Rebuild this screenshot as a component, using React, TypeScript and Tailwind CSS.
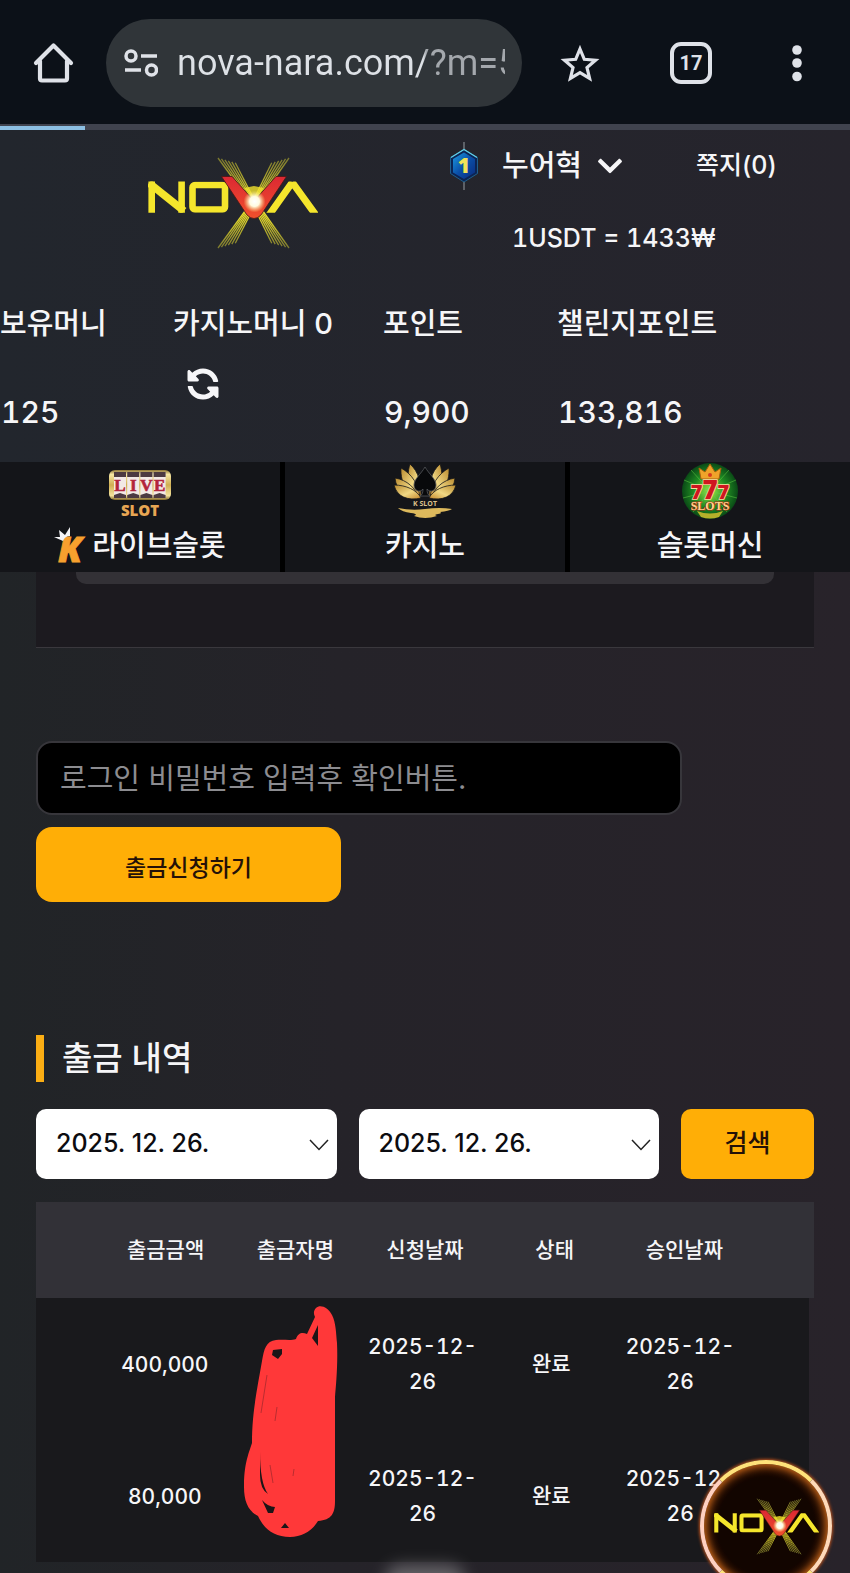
import { useId } from "react";
import { FaChevronDown, FaSyncAlt } from "react-icons/fa";

const RAYS = [0, 3, 6, 9, 12, 15];

function NovaLogo({ className }: { className: string }) {
  const id = useId();
  return (
    <svg viewBox="0 0 170 92" className={className} role="img" aria-label="NOVA">
      <defs>
        <linearGradient id={`${id}ray`} x1="0" y1="0" x2="0" y2="92" gradientUnits="userSpaceOnUse">
          <stop offset="0" stopColor="#77752f" />
          <stop offset="0.35" stopColor="#cfc62c" />
          <stop offset="0.5" stopColor="#fff22e" />
          <stop offset="0.7" stopColor="#d9cf2c" />
          <stop offset="1" stopColor="#77752f" />
        </linearGradient>
        <linearGradient id={`${id}red`} x1="0" y1="0" x2="0" y2="1">
          <stop offset="0" stopColor="#dc2833" />
          <stop offset="1" stopColor="#f0512c" />
        </linearGradient>
        <radialGradient id={`${id}glow`}>
          <stop offset="0" stopColor="#ffffff" />
          <stop offset="0.45" stopColor="#fffbe0" />
          <stop offset="1" stopColor="#ffe680" stopOpacity="0" />
        </radialGradient>
        <clipPath id={`${id}band`}>
          <rect x="0" y="24.600" width="170" height="31.200" />
        </clipPath>
      </defs>
      <g fill="none" stroke="#f5e62c" strokeWidth="6.600" clipPath={`url(#${id}band)`}>
        <path d="M3.700 60V22M33.600 60V22" />
        <path d="M1 26L36 54" strokeWidth="7.600" />
        <rect x="44.500" y="28" width="32.500" height="24.500" rx="2.500" />
        <path d="M119 61L144.500 25M144 25L170 61" strokeWidth="7" />
      </g>
      <g stroke={`url(#${id}ray)`} strokeWidth="1.300">
        {RAYS.map((n) => (
          <g key={n}>
            <line x1={70 + n * 1.15} y1={1 + n * 0.32} x2={100 + n * 0.4} y2="42" />
            <line x1={141 - n * 1.15} y1={1 + n * 0.32} x2={112 - n * 0.4} y2="42" />
            <line x1={70 + n * 1.15} y1={91 - n * 0.32} x2={100 + n * 0.4} y2="50" />
            <line x1={141 - n * 1.15} y1={91 - n * 0.32} x2={112 - n * 0.4} y2="50" />
          </g>
        ))}
      </g>
      <path
        d="M73.500 19.500H84L106 44 128 19.500H138.500L113 58Q106 65 99 58Z"
        fill={`url(#${id}red)`}
        stroke="#4a1714"
        strokeWidth="0.800"
      />
      <path d="M96 31L106 29 116 31 107 43Z" fill="#f3e42c" opacity="0.8" />
      <circle cx="106.500" cy="44.500" r="11" fill={`url(#${id}glow)`} />
    </svg>
  );
}

function BrowserBar() {
  return (
    <div className="bg-[#0c1118]">
      <div className="flex h-[124px] items-center pt-[2px] pl-8 pr-9 text-[#dfe2e8]">
        <button type="button" aria-label="홈" className="shrink-0">
          <svg viewBox="0 0 44 44" className="size-11" fill="none" stroke="currentColor" strokeWidth="4.200" strokeLinejoin="round" strokeLinecap="round">
            <path d="M4 22L21.500 4.500 39 22M8 20V37.500Q8 39.500 10 39.500H33Q35 39.500 35 37.500V20" />
          </svg>
        </button>
        <div className="ml-[30px] flex h-[88px] min-w-0 flex-1 items-center rounded-full bg-[#303539] pl-[18px] pr-[17px]">
          <svg viewBox="0 0 34 30" className="h-[30px] w-[34px] shrink-0" fill="none" stroke="currentColor" strokeWidth="3.500">
            <circle cx="7" cy="8" r="5" />
            <path d="M17 8H33M1 22H17" />
            <circle cx="27.500" cy="22" r="5" />
          </svg>
          <input
            aria-label="주소"
            readOnly
            value="nova-nara.com/?m=5"
            className="ml-[19px] min-w-0 flex-1 bg-linear-to-r from-[#dde1e6] from-75% to-[#a4a8ad] to-76% bg-clip-text font-[Roboto,sans-serif] text-[36px] leading-[48px] text-transparent outline-none"
          />
        </div>
        <button type="button" aria-label="즐겨찾기" className="ml-[38px] shrink-0">
          <svg viewBox="0 0 40 40" className="size-10" fill="none" stroke="currentColor" strokeWidth="3.200">
            <path d="M20 6L24.300 16.300 35.500 17.200 27 24.500 29.600 35.400 20 29.600 10.400 35.400 13 24.500 4.500 17.200 15.700 16.300Z" />
          </svg>
        </button>
        <button
          type="button"
          aria-label="탭 17개"
          className="ml-[70px] flex size-[42px] shrink-0 items-center justify-center rounded-[11px] border-4 border-current font-[Roboto,sans-serif] text-[20px] font-bold"
        >
          17
        </button>
        <button type="button" aria-label="메뉴" className="ml-[68px] shrink-0">
          <svg viewBox="0 0 34 44" className="h-11 w-[34px]" fill="currentColor">
            <circle cx="17" cy="9" r="4.800" />
            <circle cx="17" cy="22" r="4.800" />
            <circle cx="17" cy="35.500" r="4.800" />
          </svg>
        </button>
      </div>
      <div className="h-[6px] bg-[#40434e] pt-[2px]">
        <div className="h-1 w-[10%] bg-[#8cbfe2]" />
      </div>
    </div>
  );
}

function RankBadge() {
  const id = useId();
  return (
    <svg viewBox="0 0 28 48" className="h-12 w-7 shrink-0" role="img" aria-label="레벨 1">
      <defs>
        <linearGradient id={id} x1="0" y1="0" x2="1" y2="1">
          <stop offset="0" stopColor="#1d9be0" />
          <stop offset="0.5" stopColor="#0a4fa8" />
          <stop offset="1" stopColor="#0a2a7c" />
        </linearGradient>
      </defs>
      <path d="M14 0V8M14 40V48" stroke="#7d8288" strokeWidth="1.300" />
      <path d="M14 7.500L27.500 15.500V31.500L14 40 0.500 31.500V15.500Z" fill="#0b2454" stroke="#1f5f8c" />
      <path d="M14 10.500L25 17V30.500L14 37 3 30.500V17Z" fill={`url(#${id})`} />
      <path d="M1 15.500L14 7.500 27 15.500" fill="none" stroke="#62d0e8" strokeWidth="1.300" />
      <text x="14" y="31" textAnchor="middle" fontSize="21" fontWeight="800" fill="#f0e25a" fontFamily="Open Sans, sans-serif">
        1
      </text>
    </svg>
  );
}

function SiteHeader() {
  return (
    <header className="grid h-[148px] grid-cols-[450fr_400fr]">
      <a href="#home" className="flex items-start justify-center pt-[27px] pl-[15px]">
        <NovaLogo className="h-[92px] w-[170px]" />
      </a>
      <div className="pt-3">
        <div className="flex h-12 items-center">
          <RankBadge />
          <button type="button" className="ml-6 flex items-center gap-[14px] text-[29px] font-medium">
            누어혁
            <FaChevronDown className="size-7" aria-hidden />
          </button>
          <a href="#messages" className="ml-[72px] text-[25px] font-medium">
            쪽지(0)
          </a>
        </div>
        <p className="mt-[30px] pl-[62px] text-[25px] leading-9 font-medium tabular-nums">1USDT = 1433₩</p>
      </div>
    </header>
  );
}

function Balances() {
  const label = "text-[29px] leading-[44px] font-medium whitespace-nowrap";
  const value = "mt-11 pl-px text-[30px] leading-[44px] font-medium tabular-nums";
  return (
    <section className="grid h-[184px] grid-cols-[173fr_210fr_174fr_293fr] pt-6">
      <div>
        <h2 className={label}>보유머니</h2>
        <p className={value}>125</p>
      </div>
      <div>
        <h2 className={label}>카지노머니 0</h2>
        <button type="button" aria-label="새로고침" className="mt-[22px] ml-[14px]">
          <FaSyncAlt className="size-8 -scale-x-100" aria-hidden />
        </button>
      </div>
      <div>
        <h2 className={label}>포인트</h2>
        <p className={value}>9,900</p>
      </div>
      <div>
        <h2 className={label}>챌린지포인트</h2>
        <p className={value}>133,816</p>
      </div>
    </section>
  );
}

function LiveSlotIcon() {
  const id = useId();
  return (
    <svg viewBox="0 0 64 50" className="h-[50px] w-16" aria-hidden>
      <defs>
        <linearGradient id={id} x1="0" y1="0" x2="0" y2="1">
          <stop offset="0" stopColor="#8c7336" />
          <stop offset="0.15" stopColor="#f6e7a4" />
          <stop offset="0.5" stopColor="#cfae52" />
          <stop offset="0.85" stopColor="#f4e39c" />
          <stop offset="1" stopColor="#806628" />
        </linearGradient>
      </defs>
      <rect x="1" y="1" width="62" height="30" rx="6" fill={`url(#${id})`} />
      {["L", "I", "V", "E"].map((c, i) => (
        <g key={c}>
          <rect x={6 + i * 13.2} y="3" width="12" height="26" rx="1" fill="#f2e9e6" />
          <path d={`M${6 + i * 13.2} 3h12v5h-12zM${6 + i * 13.2} 29v-3l6 -2 6 2v3z`} fill="#4c3a42" />
          <text
            x={12 + i * 13.2}
            y="22"
            textAnchor="middle"
            fontSize="17"
            fontWeight="700"
            fill="#b3243b"
            stroke="#b3243b"
            strokeWidth="0.600"
            fontFamily="Liberation Serif, serif"
          >
            {c}
          </text>
        </g>
      ))}
      <text x="32" y="47" textAnchor="middle" fontSize="15" fontWeight="800" fill="#e8a653" fontFamily="Open Sans, sans-serif">
        SLOT
      </text>
    </svg>
  );
}

function LotusIcon() {
  const id = useId();
  const petals = (
    <g fill={`url(#${id})`} stroke="#141518" strokeWidth="0.800">
      <path d="M27 34C17 30 11 16 16 1C25 9 27 20 27 34Z" />
      <path d="M26 35C15 33 6 21 7 5C18 11 25 22 26 35Z" />
      <path d="M25 36C12 36 2 27 1 15C13 17 22 25 25 36Z" />
      <path d="M27 35C14 38 3 34 0 22C12 22 23 27 27 35Z" />
    </g>
  );
  return (
    <svg viewBox="0 0 62 56" className="h-14 w-[62px]" aria-hidden>
      <defs>
        <linearGradient id={id} x1="0" y1="0" x2="1" y2="1">
          <stop offset="0" stopColor="#b98a2e" />
          <stop offset="0.55" stopColor="#f0d884" />
          <stop offset="1" stopColor="#c4862a" />
        </linearGradient>
      </defs>
      {petals}
      <g transform="matrix(-1 0 0 1 62 0)">{petals}</g>
      <path
        d="M31 4C35 11 42 16 42 22C42 28 36 30 33 26C33 30 34 32 36 33H26C28 32 29 30 29 26C26 30 20 28 20 22C20 16 27 11 31 4Z"
        fill="#08090b"
        stroke="#55585c"
        strokeWidth="0.800"
      />
      <text x="31" y="43" textAnchor="middle" fontSize="7" fontWeight="700" fill="#dcc08b" fontFamily="Open Sans, sans-serif">
        K SLOT
      </text>
      <path d="M4 45Q18 48 31 46Q46 44 58 46Q55 48 46 49Q49 50 44 51Q39 52 43 53Q31 57 20 53Q25 51 17 50Q8 49 4 45Z" fill="#ddb95c" />
    </svg>
  );
}

function SevensIcon() {
  const id = useId();
  return (
    <svg viewBox="0 0 58 58" className="size-[58px]" aria-hidden>
      <defs>
        <radialGradient id={id}>
          <stop offset="0" stopColor="#9be84a" />
          <stop offset="0.6" stopColor="#1f8a22" />
          <stop offset="1" stopColor="#0a4a16" />
        </radialGradient>
      </defs>
      <circle cx="29" cy="29" r="28" fill={`url(#${id})`} />
      <path d="M29 29L3 18M29 29L2 36M29 29L10 8M29 29L48 8M29 29L55 18M29 29L56 36M29 29L12 50M29 29L46 50" stroke="#62cf45" opacity="0.5" />
      <path d="M20 17L18 6 24 10 29 2 34 10 40 6 38 17Z" fill="#f0a32a" stroke="#a8600e" />
      <circle cx="29" cy="13" r="2" fill="#d83a1e" />
      <text
        x="29"
        y="37"
        textAnchor="middle"
        fill="#cf1620"
        stroke="#ffd9a0"
        strokeWidth="1.600"
        paintOrder="stroke"
        fontFamily="Open Sans, sans-serif"
        fontWeight="800"
      >
        <tspan fontSize="20">7</tspan>
        <tspan fontSize="26">7</tspan>
        <tspan fontSize="20">7</tspan>
      </text>
      <path d="M16 49Q29 54 42 49L38 55Q29 58 20 55Z" fill="#b7b02a" />
      <text x="29" y="48" textAnchor="middle" fontSize="12" fontWeight="700" fill="#ffd58e" stroke="#a32b12" strokeWidth="1.200" paintOrder="stroke" fontFamily="Liberation Serif, serif">
        SLOTS
      </text>
    </svg>
  );
}

function CrownK() {
  return (
    <svg viewBox="0 0 36 38" className="h-[38px] w-9 overflow-visible" aria-hidden>
      <text x="4" y="35" fontSize="36" fontWeight="800" fontStyle="italic" fill="#f7a02e" stroke="#f7a02e" strokeWidth="0.800" fontFamily="Open Sans, sans-serif">
        K
      </text>
      <path d="M9 14L0 10 6 10 5 3 11 8 16 0 16 9Q11 9 9 14Z" fill="#f4f4f6" />
    </svg>
  );
}

function CategoryNav() {
  const tab = "flex flex-col items-center bg-[#141519]";
  const label = "flex h-[52px] items-center text-[29px] font-medium";
  return (
    <nav className="grid h-[110px] grid-cols-3 gap-[5px] bg-black">
      <a href="#live" className={tab}>
        <span className="flex h-[58px] items-end pb-px">
          <LiveSlotIcon />
        </span>
        <span className={label}>
          <CrownK />
          <span className="ml-[2px]">라이브슬롯</span>
        </span>
      </a>
      <a href="#casino" className={tab}>
        <span className="flex h-[58px] items-center">
          <LotusIcon />
        </span>
        <span className={label}>카지노</span>
      </a>
      <a href="#slots" className={tab}>
        <span className="flex h-[58px] items-center">
          <SevensIcon />
        </span>
        <span className={label}>슬롯머신</span>
      </a>
    </nav>
  );
}

function DateSelect({ label }: { label: string }) {
  return (
    <div className="relative min-w-0 flex-1">
      <select
        aria-label={label}
        className="h-[70px] w-full appearance-none rounded-[10px] bg-white px-5 text-[25px] font-medium text-[#0c0c10]"
      >
        <option>2025. 12. 26.</option>
      </select>
      <svg viewBox="0 0 20 12" className="pointer-events-none absolute top-[30px] right-2 h-3 w-5" fill="none" stroke="#222" strokeWidth="1.500">
        <path d="M1 1L10 10.500 19 1" />
      </svg>
    </div>
  );
}

function Scribble() {
  return (
    <svg viewBox="0 0 94 232" className="absolute top-[7px] left-[208px] h-[232px] w-[94px]" aria-hidden>
      <path
        d="M72 3C76 -1 84 2 88 10C92 18 92 28 93 38C94 60 92 80 91 92L91 196C91 208 88 215 74 216C68 226 58 232 46 232C30 232 20 224 14 211C4 206 0 196 0 182C0 160 4 150 8 138C8 110 12 90 18 56C20 44 22 36 32 35C40 34 46 36 52 34C54 28 58 27 63 29L71 12C69 8 70 5 72 3Z"
        fill="#ff3839"
      />
      <path d="M74 20L68 33 74 41ZM29 45L38 44 38 49 34 54 28 50ZM16 147Q16 178 24 189Q16 184 16 170ZM18 195Q24 202 31 202L29 208 24 208ZM41 218L45 223H37ZM45 215L51 217Z" fill="#1c1517" />
      <path d="M23 70L17 108M33 102L31 116M26 160L29 178M50 164L49 171" stroke="#a82a2d" strokeWidth="0.800" fill="none" />
    </svg>
  );
}

const COLUMNS = ["출금금액", "출금자명", "신청날짜", "상태", "승인날짜"];
const ROWS = [
  { amount: "400,000", requested: "2025-12-26", status: "완료", approved: "2025-12-26" },
  { amount: "80,000", requested: "2025-12-26", status: "완료", approved: "2025-12-26" },
];

function WithdrawalTable() {
  const row = "grid grid-cols-5 items-center px-[8.33%] text-center";
  const num = "px-2 text-[21px] leading-[35px] tabular-nums";
  return (
    <table className="mt-[23px] block font-medium">
      <thead className="block bg-[#323137]">
        <tr className={`${row} h-24`}>
          {COLUMNS.map((c) => (
            <th key={c} scope="col" className="text-[21px] font-medium">
              {c}
            </th>
          ))}
        </tr>
      </thead>
      <tbody className="relative mr-[5px] block bg-[#19191c]">
        {ROWS.map((r, i) => (
          <tr key={r.amount} className={`${row} h-[132px]`}>
            <td className={num}>{r.amount}</td>
            <td>{i === 0 && <Scribble />}</td>
            <td className={num}>{r.requested}</td>
            <td className="text-[21px]">{r.status}</td>
            <td className={num}>{r.approved}</td>
          </tr>
        ))}
      </tbody>
    </table>
  );
}

export default function App() {
  return (
    <div className="relative min-h-screen overflow-hidden bg-linear-to-r from-[#212427] via-[#252329] via-40% to-[#28232a] font-[Inter,'Noto_Sans_CJK_KR',sans-serif] text-[#f6f6f8]">
      <BrowserBar />
      <div className="bg-linear-to-r from-[#22262d] to-[#26242c]">
        <SiteHeader />
        <Balances />
      </div>
      <CategoryNav />
      <main className="px-[36px] pb-[11px]">
        <div className="h-[76px] border-b border-[#3a383d] bg-[#1c1a1f] px-10">
          <div className="h-3 rounded-b-[10px] bg-[#333136]" />
        </div>
        <form className="mt-[93px]" onSubmit={(e) => e.preventDefault()}>
          <input
            type="password"
            aria-label="로그인 비밀번호"
            placeholder="로그인 비밀번호 입력후 확인버튼."
            className="block h-[74px] w-[83%] rounded-[16px] border-2 border-[#37363b] bg-black px-[22px] text-[29px] outline-none placeholder:text-[#8c8c90]"
          />
          <button
            type="submit"
            className="mt-3 block h-[75px] w-[305px] rounded-[16px] bg-[#ffae06] pt-2 text-[23px] font-medium text-[#241108]"
          >
            출금신청하기
          </button>
        </form>
        <h1 className="mt-[133px] flex h-[47px] items-center border-l-8 border-[#fbae14] pl-[18px] text-[33px] font-medium">출금 내역</h1>
        <form className="mt-[27px] flex gap-[22px]" onSubmit={(e) => e.preventDefault()}>
          <DateSelect label="시작일" />
          <DateSelect label="종료일" />
          <button type="submit" className="h-[70px] w-[133px] rounded-[10px] bg-[#ffae06] text-[25px] font-medium text-[#241108]">
            검색
          </button>
        </form>
        <WithdrawalTable />
      </main>
      <div className="absolute -bottom-6 left-1/2 h-8 w-[80px] -translate-x-1/2 rounded-full bg-[#a5a3a6] opacity-50 blur-[8px]" />
      <a
        href="#nova"
        aria-label="NOVA"
        className="fixed right-[18px] -bottom-[19px] flex size-[132px] items-center justify-center rounded-full border-4 border-t-[#ffe27a] border-r-[#ffd9b8] border-b-[#ffe27a] border-l-[#ffd0c0] bg-[radial-gradient(circle,#120500_55%,#3a1400_80%,#a84a10_100%)] shadow-[0_0_3px_1px_#b8501c,inset_0_0_8px_2px_#d8701c]"
      >
        <NovaLogo className="h-[57px] w-[105px]" />
      </a>
    </div>
  );
}
